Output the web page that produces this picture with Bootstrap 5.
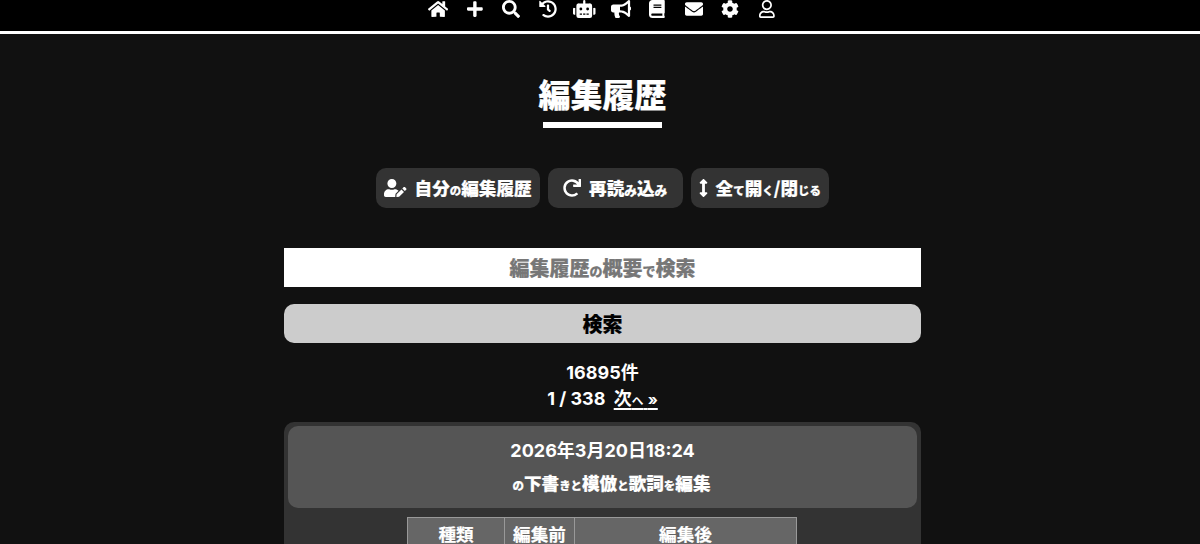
<!DOCTYPE html>
<html lang="ja">
<head>
<meta charset="utf-8">
<title>編集履歴</title>
<link rel="stylesheet" href="https://cdn.jsdelivr.net/npm/bootstrap@5.3.0/dist/css/bootstrap.min.css">
<style>
html,body{height:544px;overflow:hidden;}
body{background:#111;color:#fff;font-family:"Inter","Noto Sans CJK JP",sans-serif;font-weight:700;}
.kn{font-size:.65em;}
.knwide{font-size:.72em;}
.heavyjp{font-family:"Noto Sans CJK JP",sans-serif;font-weight:900;-webkit-text-stroke:.2px currentColor;}
.topbar{background:#000;height:34px;border-bottom:3px solid #fff;padding-left:5px;}
.topcell{width:36.5px;height:18px;color:#fff;}
.topcell svg{height:18px;display:block;fill:#fff;}
.pagewrap{padding-left:5px;}
.sheet{width:637px;}
.pagetitle{font-size:32px;line-height:40px;font-weight:900;margin:39px 0 0;}
.titlebar{width:119px;height:6px;background:#fff;margin-top:9px;}
.toolrow{margin-top:40px;gap:8px;}
.toolbtn{height:40px;min-width:135px;background:#333;color:#fff;border:0;border-radius:10px;font-size:17.6px;padding:0 8px;gap:8px;line-height:1;}
.toolbtn svg{height:18px;fill:#fff;display:block;}
.searchbox{display:block;width:100%;height:39px;margin-top:40px;background:#fff;font-size:20px;text-align:center;color:#777;line-height:39px;}
.searchgo{width:100%;height:39px;margin-top:17px;background:#ccc;color:#000;border:0;border-radius:10px;font-size:20px;line-height:1;}
.countline{font-size:18px;line-height:26px;margin-top:17px;}
.nextlink{color:#fff;text-decoration:underline;text-decoration-thickness:2px;text-underline-offset:3px;text-decoration-skip-ink:none;margin-left:4px;}
.arrowmark{font-size:.85em;}
.logcard{background:#333;border-radius:10px;padding:4px;margin-top:8px;height:300px;}
.loghead{background:#555;border-radius:10px;height:82px;padding-top:11px;}
.logdate{font-size:18px;line-height:28px;}
.logsum{font-size:17.6px;line-height:28px;margin-top:4px;padding-left:18px;}
.difftable{width:390px;margin:9px 0 0 119px;border-collapse:collapse;font-size:17.6px;}
.difftable th{background:#666;border:1px solid #999;text-align:center;line-height:32px;padding:0;}
.colkind{width:97px;}
.colbefore{width:70px;}
</style>
</head>
<body>
<nav class="topbar d-flex justify-content-center align-items-start">
<a class="topcell d-flex justify-content-center" href="#"><svg viewBox="0 0 576 512"><path d="M280.37 148.26L96 300.11V464a16 16 0 0 0 16 16l112.06-.29a16 16 0 0 0 15.92-16V368a16 16 0 0 1 16-16h64a16 16 0 0 1 16 16v95.64a16 16 0 0 0 16 16.05L464 480a16 16 0 0 0 16-16V300L295.67 148.26a12.19 12.19 0 0 0-15.3 0zM571.6 251.47L488 182.56V44.05a12 12 0 0 0-12-12h-56a12 12 0 0 0-12 12v72.61L318.47 43a48 48 0 0 0-61 0L4.34 251.47a12 12 0 0 0-1.6 16.9l25.5 31A12 12 0 0 0 45.15 301l235.22-193.74a12.19 12.19 0 0 1 15.3 0L530.9 301a12 12 0 0 0 16.9-1.6l25.5-31a12 12 0 0 0-1.7-16.93z"/></svg></a>
<a class="topcell d-flex justify-content-center" href="#"><svg viewBox="0 0 448 512"><path d="M416 208H272V64c0-17.67-14.33-32-32-32h-32c-17.67 0-32 14.33-32 32v144H32c-17.67 0-32 14.33-32 32v32c0 17.67 14.33 32 32 32h144v144c0 17.67 14.33 32 32 32h32c17.67 0 32-14.33 32-32V304h144c17.67 0 32-14.33 32-32v-32c0-17.67-14.33-32-32-32z"/></svg></a>
<a class="topcell d-flex justify-content-center" href="#"><svg viewBox="0 0 512 512"><path d="M505 442.7L405.3 343c-4.5-4.5-10.6-7-17-7H372c27.6-35.3 44-79.7 44-128C416 93.1 322.9 0 208 0S0 93.1 0 208s93.1 208 208 208c48.3 0 92.7-16.4 128-44v16.3c0 6.4 2.5 12.5 7 17l99.7 99.7c9.4 9.4 24.6 9.4 33.9 0l28.3-28.3c9.4-9.4 9.4-24.6.1-34zM208 336c-70.7 0-128-57.2-128-128 0-70.7 57.2-128 128-128 70.7 0 128 57.2 128 128 0 70.7-57.2 128-128 128z"/></svg></a>
<a class="topcell d-flex justify-content-center" href="#"><svg viewBox="0 0 512 512"><path d="M504 255.531c.253 136.64-111.18 248.372-247.82 248.468-59.015.042-113.223-20.53-155.822-54.911-11.077-8.94-11.905-25.541-1.839-35.607l11.267-11.267c8.609-8.609 22.353-9.551 31.891-1.984C173.062 425.135 212.781 440 256 440c101.705 0 184-82.311 184-184 0-101.705-82.311-184-184-184-48.814 0-93.149 18.969-126.068 49.932l50.754 50.754c10.08 10.08 2.941 27.314-11.313 27.314H24c-8.837 0-16-7.163-16-16V38.627c0-14.254 17.234-21.393 27.314-11.314l49.372 49.372C129.209 34.136 189.552 8 256 8c136.81 0 247.747 110.78 248 247.531zm-180.912 78.784l9.823-12.63c8.138-10.463 6.253-25.542-4.21-33.679L288 256.349V152c0-13.255-10.745-24-24-24h-16c-13.255 0-24 10.745-24 24v135.651l65.409 50.874c10.463 8.137 25.541 6.253 33.679-4.21z"/></svg></a>
<a class="topcell d-flex justify-content-center" href="#"><svg viewBox="0 0 640 512"><path d="M32,224H64V416H32A31.96166,31.96166,0,0,1,0,384V256A31.96166,31.96166,0,0,1,32,224Zm512-48V448a64.06328,64.06328,0,0,1-64,64H160a64.06328,64.06328,0,0,1-64-64V176a79.974,79.974,0,0,1,80-80H288V32a32,32,0,0,1,64,0V96H464A79.974,79.974,0,0,1,544,176ZM264,256a40,40,0,1,0-40,40A39.997,39.997,0,0,0,264,256Zm-8,128H192v32h64Zm96,0H288v32h64ZM456,256a40,40,0,1,0-40,40A39.997,39.997,0,0,0,456,256Zm-8,128H384v32h64ZM640,256V384a31.96166,31.96166,0,0,1-32,32H576V224h32A31.96166,31.96166,0,0,1,640,256Z"/></svg></a>
<a class="topcell d-flex justify-content-center" href="#"><svg viewBox="0 0 576 512"><path d="M576 240c0-23.63-12.95-44.04-32-55.12V32.01C544 23.26 537.02 0 512 0c-7.12 0-14.19 2.38-19.98 7.02l-85.03 68.03C364.28 109.19 310.66 128 256 128H64c-35.35 0-64 28.65-64 64v96c0 35.35 28.65 64 64 64h33.7c-1.39 10.48-2.18 21.14-2.18 32 0 39.77 9.26 77.35 25.56 110.94 5.19 10.69 16.52 17.06 28.4 17.06h74.28c26.05 0 41.69-29.84 25.9-50.56-16.4-21.52-26.15-48.36-26.15-77.44 0-11.11 1.62-21.79 4.41-32H256c54.66 0 108.28 18.81 150.98 52.95l85.03 68.03a32.023 32.023 0 0 0 19.98 7.02c24.92 0 32-22.78 32-32V295.13C563.05 284.04 576 263.63 576 240zm-96 141.42l-33.05-26.44C392.95 311.78 325.12 288 256 288v-96c69.12 0 136.95-23.78 190.95-66.98L480 98.58v282.84z"/></svg></a>
<a class="topcell d-flex justify-content-center" href="#"><svg viewBox="0 0 448 512"><path d="M448 360V24c0-13.3-10.7-24-24-24H96C43 0 0 43 0 96v320c0 53 43 96 96 96h328c13.3 0 24-10.7 24-24v-16c0-7.5-3.5-14.3-8.9-18.7-4.2-15.4-4.2-59.3 0-74.7 5.4-4.3 8.9-11.1 8.9-18.6zM128 134c0-3.3 2.7-6 6-6h212c3.3 0 6 2.7 6 6v20c0 3.3-2.7 6-6 6H134c-3.3 0-6-2.7-6-6v-20zm0 64c0-3.3 2.7-6 6-6h212c3.3 0 6 2.7 6 6v20c0 3.3-2.7 6-6 6H134c-3.3 0-6-2.7-6-6v-20zm253.4 250H96c-17.7 0-32-14.3-32-32 0-17.6 14.4-32 32-32h285.4c-1.9 17.1-1.9 46.9 0 64z"/></svg></a>
<a class="topcell d-flex justify-content-center" href="#"><svg viewBox="0 0 512 512"><path d="M502.3 190.8c3.9-3.1 9.7-.2 9.7 4.7V400c0 26.5-21.5 48-48 48H48c-26.5 0-48-21.5-48-48V195.6c0-5 5.7-7.8 9.7-4.7 22.4 17.4 52.1 39.5 154.1 113.6 21.1 15.4 56.7 47.8 92.2 47.6 35.7.3 72-32.8 92.3-47.6 102-74.1 131.6-96.3 154-113.7zM256 320c23.2.4 56.6-29.2 73.4-41.4 132.7-96.3 142.8-104.7 173.4-128.7 5.8-4.5 9.2-11.5 9.2-18.9v-19c0-26.5-21.5-48-48-48H48C21.5 64 0 85.5 0 112v19c0 7.4 3.4 14.3 9.2 18.9 30.6 23.9 40.7 32.4 173.4 128.7 16.8 12.2 50.2 41.8 73.4 41.4z"/></svg></a>
<a class="topcell d-flex justify-content-center" href="#"><svg viewBox="0 0 512 512"><path d="M487.4 315.7l-42.6-24.6c4.3-23.2 4.3-47 0-70.2l42.6-24.6c4.9-2.8 7.1-8.6 5.5-14-11.1-35.6-30-67.8-54.7-94.6-3.8-4.1-10-5.1-14.8-2.3L380.8 110c-17.9-15.4-38.5-27.3-60.8-35.1V25.8c0-5.6-3.9-10.5-9.4-11.7-36.7-8.2-74.3-7.8-109.2 0-5.5 1.2-9.4 6.1-9.4 11.7V75c-22.2 7.9-42.8 19.8-60.8 35.1L88.7 85.5c-4.9-2.8-11-1.9-14.8 2.3-24.7 26.7-43.6 58.9-54.7 94.6-1.7 5.4.6 11.2 5.5 14L67.3 221c-4.3 23.2-4.3 47 0 70.2l-42.6 24.6c-4.9 2.8-7.1 8.6-5.5 14 11.1 35.6 30 67.8 54.7 94.6 3.8 4.1 10 5.1 14.8 2.3l42.6-24.6c17.9 15.4 38.5 27.3 60.8 35.1v49.2c0 5.6 3.9 10.5 9.4 11.7 36.7 8.2 74.3 7.8 109.2 0 5.5-1.2 9.4-6.1 9.4-11.7v-49.2c22.2-7.9 42.8-19.8 60.8-35.1l42.6 24.6c4.9 2.8 11 1.9 14.8-2.3 24.7-26.7 43.6-58.9 54.7-94.6 1.5-5.5-.7-11.3-5.6-14.1zM256 336c-44.1 0-80-35.9-80-80s35.9-80 80-80 80 35.9 80 80-35.9 80-80 80z"/></svg></a>
<a class="topcell d-flex justify-content-center" href="#"><svg viewBox="0 0 448 512"><path d="M313.6 304c-28.7 0-42.5 16-89.6 16-47.1 0-60.8-16-89.6-16C60.2 304 0 364.2 0 438.4V464c0 26.5 21.5 48 48 48h352c26.5 0 48-21.5 48-48v-25.6c0-74.2-60.2-134.4-134.4-134.4zM400 464H48v-25.6c0-47.6 38.8-86.4 86.4-86.4 14.6 0 38.3 16 89.6 16 51.7 0 74.9-16 89.6-16 47.6 0 86.4 38.8 86.4 86.4V464zM224 288c79.5 0 144-64.5 144-144S303.5 0 224 0 80 64.5 80 144s64.5 144 144 144zm0-240c52.9 0 96 43.1 96 96s-43.1 96-96 96-96-43.1-96-96 43.1-96 96-96z"/></svg></a>
</nav>
<div class="pagewrap d-flex justify-content-center">
<main class="sheet d-flex flex-column align-items-center text-center">
<h1 class="pagetitle heavyjp">編集履歴</h1>
<div class="titlebar"></div>
<div class="toolrow d-flex justify-content-center">
<button class="toolbtn d-flex align-items-center justify-content-center" type="button"><svg viewBox="0 0 640 512"><path d="M224 256c70.7 0 128-57.3 128-128S294.7 0 224 0 96 57.3 96 128s57.3 128 128 128zm89.6 32h-16.7c-22.2 10.2-46.9 16-72.9 16s-50.6-5.8-72.9-16h-16.7C60.2 288 0 348.2 0 422.4V464c0 26.5 21.5 48 48 48h274.9c-2.4-6.8-3.4-14-2.6-21.3l6.8-60.9 1.2-11.1 7.9-7.9 77.3-77.3c-24.5-27.7-60-45.5-99.9-45.5zm45.3 145.3l-6.8 61c-1.1 10.2 7.5 18.8 17.6 17.6l60.9-6.8 137.9-137.9-71.7-71.7-137.9 137.8zM633 268.9L595.1 231c-9.3-9.3-24.5-9.3-33.8 0l-37.8 37.8-4.1 4.1 71.8 71.7 41.8-41.8c9.3-9.4 9.3-24.5 0-33.9z"/></svg><span class="heavyjp">自分<span class="kn">の</span>編集履歴</span></button>
<button class="toolbtn d-flex align-items-center justify-content-center" type="button"><svg viewBox="0 0 512 512"><path d="M500.33 0h-47.41a12 12 0 0 0-12 12.57l4 82.76A247.42 247.42 0 0 0 256 8C119.34 8 7.9 119.53 8 256.19 8.1 393.07 119.1 504 256 504a247.1 247.1 0 0 0 166.18-63.91 12 12 0 0 0 .48-17.43l-34-34a12 12 0 0 0-16.38-.55A176 176 0 1 1 402.1 157.8l-101.53-4.87a12 12 0 0 0-12.57 12v47.41a12 12 0 0 0 12 12h200.33a12 12 0 0 0 12-12V12a12 12 0 0 0-12-12z"/></svg><span class="heavyjp">再読<span class="knwide">み</span>込<span class="knwide">み</span></span></button>
<button class="toolbtn d-flex align-items-center justify-content-center" type="button"><svg viewBox="0 0 256 512"><path d="M214.059 377.941H168V134.059h46.059c21.382 0 32.09-25.851 16.971-40.971L144.971 7.029c-9.373-9.373-24.568-9.373-33.941 0L24.971 93.088c-15.119 15.119-4.411 40.971 16.971 40.971H88v243.882H41.941c-21.382 0-32.09 25.851-16.971 40.971l86.059 86.059c9.373 9.373 24.568 9.373 33.941 0l86.059-86.059c15.12-15.119 4.412-40.971-16.97-40.971z"/></svg><span class="heavyjp">全<span class="kn">て</span>開<span class="kn">く</span>/閉<span class="kn">じる</span></span></button>
</div>
<div class="searchbox heavyjp">編集履歴<span class="kn">の</span>概要<span class="kn">で</span>検索</div>
<button class="searchgo heavyjp" type="button">検索</button>
<div class="countline">16895件<br>1 / 338 <a class="nextlink" href="#">次<span class="kn">へ</span> <span class="arrowmark">»</span></a></div>
<section class="logcard w-100">
<div class="loghead">
<div class="logdate">2026年3月20日18:24</div>
<div class="logsum heavyjp"><span class="kn">の</span>下書<span class="kn">きと</span>模倣<span class="kn">と</span>歌詞<span class="kn">を</span>編集</div>
</div>
<table class="difftable heavyjp"><thead><tr><th class="colkind">種類</th><th class="colbefore">編集前</th><th>編集後</th></tr></thead></table>
</section>
</main>
</div>
<script src="https://cdn.jsdelivr.net/npm/bootstrap@5.3.0/dist/js/bootstrap.bundle.min.js"></script>
</body>
</html>
